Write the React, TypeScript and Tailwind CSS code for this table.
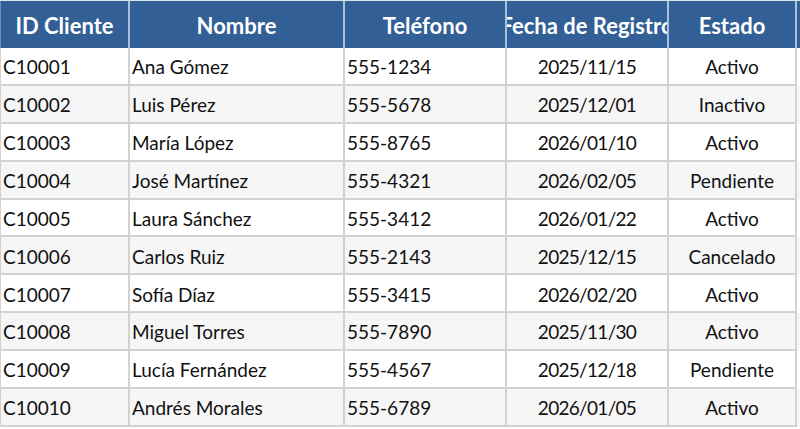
import React from 'react';

type Cliente = {
    id: string;
    nombre: string;
    telefono: string;
    fecha: string;
    estado: string;
};

const clientes: Cliente[] = [
    { id: 'C10001', nombre: 'Ana Gómez', telefono: '555-1234', fecha: '2025/11/15', estado: 'Activo' },
    { id: 'C10002', nombre: 'Luis Pérez', telefono: '555-5678', fecha: '2025/12/01', estado: 'Inactivo' },
    { id: 'C10003', nombre: 'María López', telefono: '555-8765', fecha: '2026/01/10', estado: 'Activo' },
    { id: 'C10004', nombre: 'José Martínez', telefono: '555-4321', fecha: '2026/02/05', estado: 'Pendiente' },
    { id: 'C10005', nombre: 'Laura Sánchez', telefono: '555-3412', fecha: '2026/01/22', estado: 'Activo' },
    { id: 'C10006', nombre: 'Carlos Ruiz', telefono: '555-2143', fecha: '2025/12/15', estado: 'Cancelado' },
    { id: 'C10007', nombre: 'Sofía Díaz', telefono: '555-3415', fecha: '2026/02/20', estado: 'Activo' },
    { id: 'C10008', nombre: 'Miguel Torres', telefono: '555-7890', fecha: '2025/11/30', estado: 'Activo' },
    { id: 'C10009', nombre: 'Lucía Fernández', telefono: '555-4567', fecha: '2025/12/18', estado: 'Pendiente' },
    { id: 'C10010', nombre: 'Andrés Morales', telefono: '555-6789', fecha: '2026/01/05', estado: 'Activo' },
];

const headers = ['ID Cliente', 'Nombre', 'Teléfono', 'Fecha de Registro', 'Estado'];

const cols = 'grid grid-cols-[130px_215px_162px_162px_128px]';

const App: React.FC = () => {
    return (
        <div className="w-[800px] h-[429px] bg-white overflow-hidden font-['Lato','Carlito',sans-serif] text-[19px] text-[#111]">
            <div className={`${cols} h-[48px] bg-[#325f95] text-white font-bold border-t border-[#d9e2ee]`}>
                {headers.map((h, i) => (
                    <div
                        key={h}
                        className={`flex items-center justify-center overflow-hidden whitespace-nowrap text-[22px] pt-[1px] border-r-2 border-[#a9c0dc] ${i === 0 ? 'border-l border-l-[#6f8fb8]' : ''}`}
                    >
                        {h}
                    </div>
                ))}
            </div>
            {clientes.map((c, idx) => (
                <div
                    key={c.id}
                    className={`${cols} h-[37.9px] ${idx % 2 === 1 ? 'bg-[#f6f6f6]' : 'bg-white'}`}
                >
                    <div className="flex items-center pl-[2px] pt-[3px] border-l border-r-2 border-b-2 border-[#d2d2d2] whitespace-nowrap">{c.id}</div>
                    <div className="flex items-center pl-[2px] pt-[3px] border-r-2 border-b-2 border-[#d2d2d2] whitespace-nowrap">{c.nombre}</div>
                    <div className="flex items-center pl-[2px] pt-[3px] border-r-2 border-b-2 border-[#d2d2d2] whitespace-nowrap">{c.telefono}</div>
                    <div className="flex items-center justify-center pt-[3px] tracking-[-0.7px] border-r-2 border-b-2 border-[#d2d2d2] whitespace-nowrap">{c.fecha}</div>
                    <div className="flex items-center justify-center pt-[3px] border-r-2 border-b-2 border-[#d2d2d2] whitespace-nowrap">{c.estado}</div>
                </div>
            ))}
        </div>
    );
};

export default App;
